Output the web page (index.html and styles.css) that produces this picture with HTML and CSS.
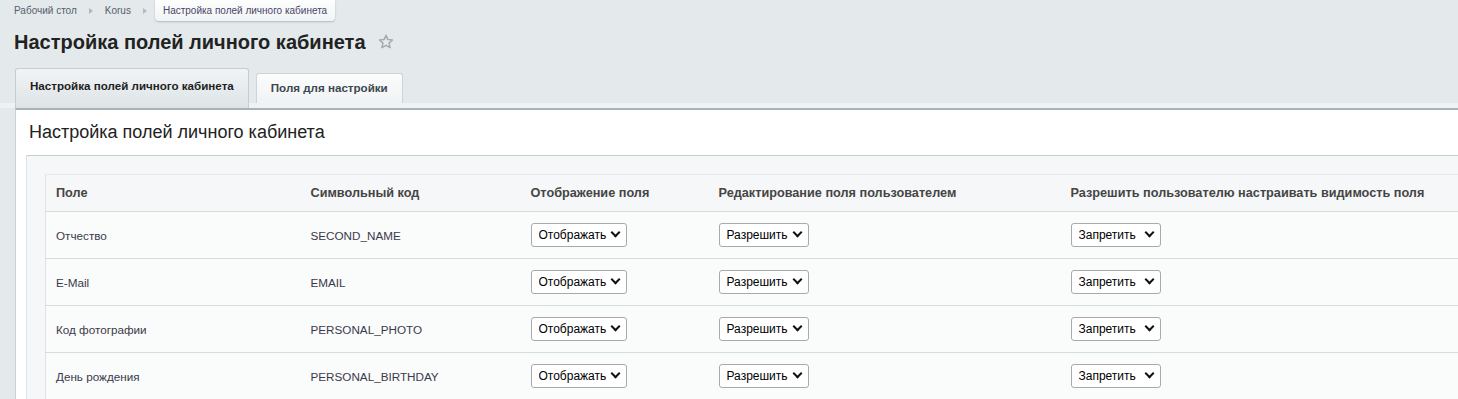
FILE: index.html
```html
<!DOCTYPE html>
<html lang="ru">
<head>
    <meta charset="UTF-8">
    <title>Настройка полей личного кабинета</title>
    <link rel="stylesheet" href="styles.css">
</head>
<body>
    <div class="breadcrumbs">
        <a href="#" class="crumb">Рабочий стол</a>
        <span class="crumb-arrow"></span>
        <a href="#" class="crumb">Korus</a>
        <span class="crumb-arrow"></span>
        <span class="crumb crumb-current">Настройка полей личного кабинета</span>
    </div>

    <h1 class="page-title">
        Настройка полей личного кабинета
        <svg class="star" width="16" height="16" viewBox="0 0 16 16">
            <path d="M8 1.3l1.9 4.3 4.6.4-3.5 3.1 1.1 4.6L8 11.3l-4.1 2.4 1.1-4.6L1.5 6l4.6-.4z" fill="none" stroke="#a3abb0" stroke-width="1.5" stroke-linejoin="round"/>
        </svg>
    </h1>

    <div class="tabs">
        <div class="tab tab-active">Настройка полей личного кабинета</div>
        <div class="tab">Поля для настройки</div>
    </div>

    <div class="panel">
        <div class="panel-title">Настройка полей личного кабинета</div>
        <div class="panel-inner">
            <table class="fields">
                <colgroup>
                    <col style="width: 255px">
                    <col style="width: 220px">
                    <col style="width: 188px">
                    <col style="width: 352px">
                    <col>
                </colgroup>
                <thead>
                    <tr>
                        <th>Поле</th>
                        <th>Символьный код</th>
                        <th>Отображение поля</th>
                        <th>Редактирование поля пользователем</th>
                        <th>Разрешить пользователю настраивать видимость поля</th>
                    </tr>
                </thead>
                <tbody>
                    <tr>
                        <td>Отчество</td>
                        <td>SECOND_NAME</td>
                        <td><span class="select-wrap"><select><option>Отображать</option><option>Скрыть</option></select></span></td>
                        <td><span class="select-wrap"><select><option>Разрешить</option><option>Запретить</option></select></span></td>
                        <td><span class="select-wrap"><select><option>Запретить</option><option>Разрешить</option></select></span></td>
                    </tr>
                    <tr>
                        <td>E-Mail</td>
                        <td>EMAIL</td>
                        <td><span class="select-wrap"><select><option>Отображать</option><option>Скрыть</option></select></span></td>
                        <td><span class="select-wrap"><select><option>Разрешить</option><option>Запретить</option></select></span></td>
                        <td><span class="select-wrap"><select><option>Запретить</option><option>Разрешить</option></select></span></td>
                    </tr>
                    <tr>
                        <td>Код фотографии</td>
                        <td>PERSONAL_PHOTO</td>
                        <td><span class="select-wrap"><select><option>Отображать</option><option>Скрыть</option></select></span></td>
                        <td><span class="select-wrap"><select><option>Разрешить</option><option>Запретить</option></select></span></td>
                        <td><span class="select-wrap"><select><option>Запретить</option><option>Разрешить</option></select></span></td>
                    </tr>
                    <tr>
                        <td>День рождения</td>
                        <td>PERSONAL_BIRTHDAY</td>
                        <td><span class="select-wrap"><select><option>Отображать</option><option>Скрыть</option></select></span></td>
                        <td><span class="select-wrap"><select><option>Разрешить</option><option>Запретить</option></select></span></td>
                        <td><span class="select-wrap"><select><option>Запретить</option><option>Разрешить</option></select></span></td>
                    </tr>
                </tbody>
            </table>
        </div>
    </div>
</body>
</html>
```

FILE: styles.css
```css
html, body {
    overflow: hidden;
}
body {
    margin: 0;
    font-family: 'Liberation Sans', Arial, sans-serif;
    background: #e4eaec;
    color: #333;
}
.breadcrumbs {
    display: flex;
    align-items: center;
    height: 21px;
    padding-left: 14px;
    font-size: 10px;
}
.crumb {
    color: #56606b;
    text-decoration: none;
}
.crumb-arrow {
    width: 0;
    height: 0;
    margin: 0 12px 0 12px;
    border-left: 4px solid #b1b9bd;
    border-top: 3px solid transparent;
    border-bottom: 3px solid transparent;
}
.crumb-current {
    align-self: stretch;
    display: flex;
    align-items: center;
    padding: 0 8px;
    margin-left: -4px;
    background: linear-gradient(#fdfefe, #f1f4f5);
    border-radius: 0 0 4px 4px;
    box-shadow: 0 1px 2px rgba(0, 0, 0, 0.22);
    color: #4c4466;
}
.page-title {
    display: flex;
    align-items: center;
    margin: 9px 0 0 14px;
    font-size: 20px;
    line-height: 24px;
    font-weight: bold;
    color: #222;
}
.star {
    margin-left: 12px;
}
.tabs {
    display: flex;
    align-items: flex-start;
    gap: 7px;
    height: 40px;
    margin-top: 14px;
    padding-left: 15px;
    background: linear-gradient(transparent 35px, #eef2f4 35px);
}
.tab {
    box-sizing: border-box;
    height: 30px;
    margin-top: 5px;
    padding: 0 14px;
    line-height: 28px;
    font-size: 11.6px;
    font-weight: bold;
    color: #3d4750;
    background: linear-gradient(#fbfcfc, #f0f3f4);
    border: 1px solid #cdd5d9;
    border-bottom: none;
    border-radius: 3px 3px 0 0;
}
.tab-active {
    height: 40px;
    margin-top: 0;
    line-height: 34px;
    color: #1e1e1e;
    background: linear-gradient(#f1f4f5, #dde3e6);
    border-color: #c5cdd1;
}
.panel {
    margin: 0 -20px 0 15px;
    padding: 11px 0 0 0;
    background: #fff;
    border-top: 2px solid #a9b2b7;
    border-left: 1px solid #cbd2d6;
}
.panel-title {
    padding-left: 13px;
    font-size: 18px;
    line-height: 22px;
    color: #222;
}
.panel-inner {
    margin: 12px 0 0 10px;
    padding: 18px 0 0 18px;
    background: #f5f7f8;
    border-top: 1px solid #c6ced2;
    border-left: 1px solid #dee3e6;
}
.fields {
    width: 1500px;
    table-layout: fixed;
    border-collapse: collapse;
    border-top: 1px solid #e6eaec;
    border-left: 1px solid #dce2e5;
}
.fields th {
    height: 36px;
    padding: 0 0 0 10px;
    text-align: left;
    font-size: 12.7px;
    font-weight: bold;
    color: #454545;
    background: #f5f7f8;
    border-bottom: 1px solid #d5dce0;
}
.fields td {
    height: 46px;
    padding: 0 0 0 10px;
    font-size: 11.7px;
    color: #3b3a4a;
    background: #fafbfb;
    border-bottom: 1px solid #d5dce0;
}
.select-wrap {
    position: relative;
    display: inline-block;
    vertical-align: middle;
}
.select-wrap::after {
    content: "";
    position: absolute;
    right: 8px;
    top: 6px;
    width: 5px;
    height: 5px;
    border-right: 2.5px solid #111;
    border-bottom: 2.5px solid #111;
    transform: rotate(45deg);
    pointer-events: none;
}
.fields select {
    appearance: none;
    -webkit-appearance: none;
    box-sizing: border-box;
    height: 24px;
    padding: 0 19px 0 7px;
    font-family: 'Liberation Sans', Arial, sans-serif;
    font-size: 12px;
    color: #000;
    background: #fff;
    border: 1px solid #a9a9a9;
    border-radius: 3px;
}
```
